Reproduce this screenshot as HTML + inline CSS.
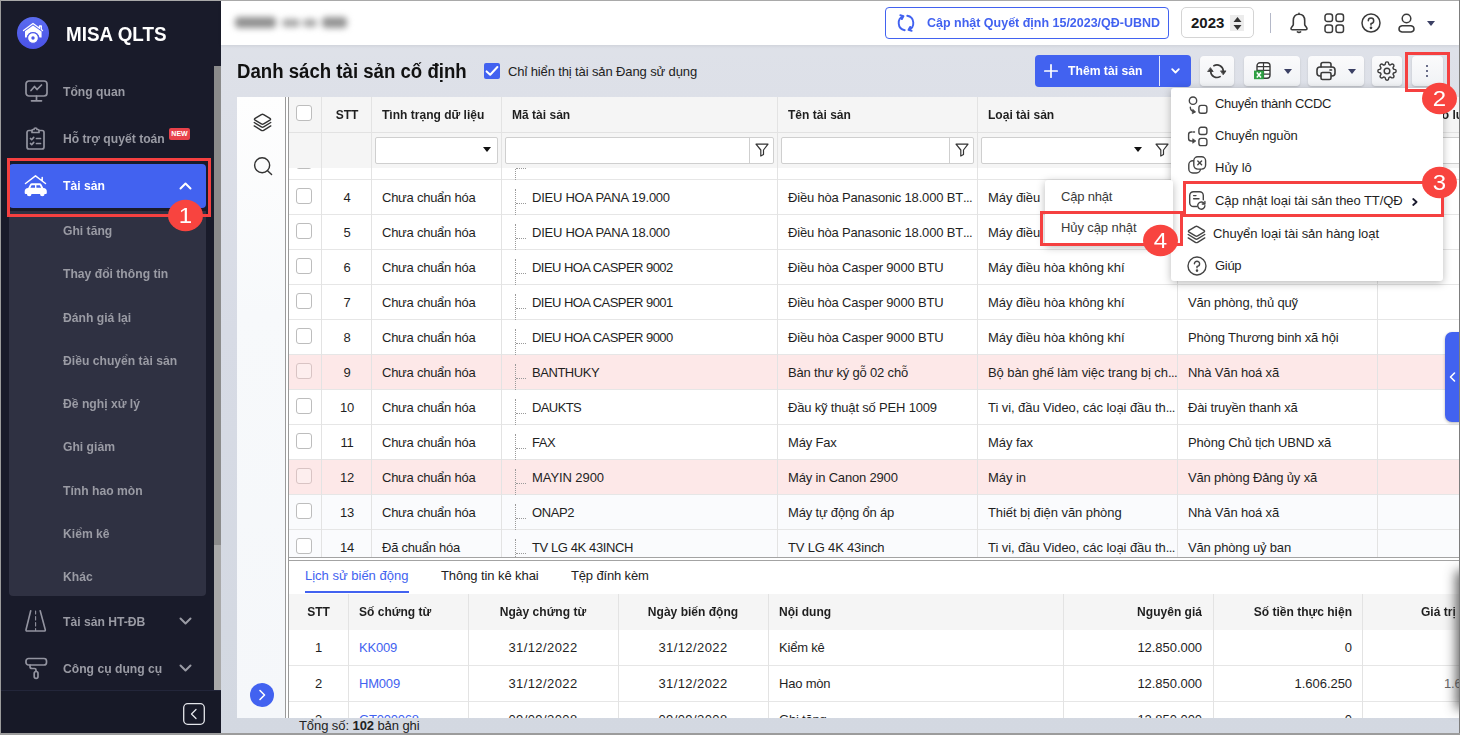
<!DOCTYPE html>
<html lang="vi">
<head>
<meta charset="utf-8">
<title>MISA QLTS - Danh sách tài sản cố định</title>
<style>
*{box-sizing:border-box;margin:0;padding:0}
html,body{width:1460px;height:735px;overflow:hidden;background:#e0e3ea;font-family:"Liberation Sans",sans-serif;font-size:13px;color:#1f1f1f}
#app{position:relative;width:1460px;height:735px;overflow:hidden;background:linear-gradient(#dfe2e9,#dde0e8 14%,#d7dbe5 45%,#d3d8e1)}
.abs{position:absolute}
i{font-style:normal;display:block;position:absolute}
svg{display:block;position:absolute;overflow:visible}
/* frame */
#frame-t{left:0;top:0;width:1460px;height:1px;background:#a9a9a9;z-index:50}
#frame-l{left:0;top:0;width:1px;height:735px;background:#9b9b9b;z-index:50}
#frame-r{left:1459px;top:0;width:1px;height:735px;background:#7d7d7d;z-index:50}
#frame-b{left:0;top:733px;width:1460px;height:2px;background:#9c9c9c;z-index:50}
/* sidebar */
#side{left:0;top:0;width:221px;height:735px;background:#191b2a}
#side .lbl{position:absolute;left:63px;font-weight:bold;font-size:13.5px;transform:scaleX(.9);transform-origin:0 50%;margin-top:1px;color:#9a9ba4;white-space:nowrap;line-height:20px}
#sb-thumb{left:214px;top:66px;width:7px;height:479px;background:#8b8b8b}
#sb-track{left:214px;top:545px;width:7px;height:145px;background:#a9a9a9}
#side-bot{left:0;top:690px;width:221px;height:44px;background:#171927;border-top:1px solid #23263a}
#sub{left:9px;top:211px;width:197px;height:385px;background:#2f3142;border-radius:0 0 4px 4px}
#act{left:9px;top:164px;width:197px;height:44px;background:#4262f0;border-radius:4px}
.si{position:absolute;left:63px;font-weight:bold;font-size:13.5px;transform:scaleX(.9);transform-origin:0 50%;margin-top:1px;color:#9a9ba4;white-space:nowrap;line-height:20px}
.new{position:absolute;left:169px;top:128px;width:21px;height:12px;background:#e8424a;border-radius:2px;color:#fff;font-size:7px;font-weight:bold;line-height:12px;text-align:center;letter-spacing:0}
/* red annotations */
.rbox{position:absolute;border:3px solid #f54040;z-index:30}
.badge{position:absolute;width:35px;height:35px;border-radius:50%;background:#f8443f;color:#fff;font-size:24px;line-height:36px;text-align:center;z-index:31;transform:scaleY(.894)}
/* topbar */
#top{left:221px;top:1px;width:1238px;height:44px;background:#fff;box-shadow:0 1px 3px rgba(0,0,0,.08)}
#upd{left:885px;top:7px;width:284px;height:32px;border:1px solid #4262f0;border-radius:4px;background:#fff;color:#4262f0;font-weight:bold;font-size:13px;line-height:30px;white-space:nowrap}
#upd span{position:absolute;left:41px;top:0;transform:scaleX(.96);transform-origin:0 50%}
#year{left:1181px;top:7px;width:73px;height:31px;border:1px solid #d4d4d4;border-radius:5px;background:#fff}
#year b{position:absolute;left:9px;top:0;line-height:30px;font-size:15px;color:#1a1a1a}
#spin{left:48px;top:7px;width:14px;height:16px;background:#ececec}
#sep{left:1270px;top:13px;width:1px;height:20px;background:#b4b8c8}
/* toolbar */
#title{left:237px;top:57px;font-size:20px;transform:scaleX(.931);transform-origin:0 50%;font-weight:bold;color:#111;white-space:nowrap;line-height:28px}
#chk{left:484px;top:63px;width:16px;height:16px;background:#4262f0;border-radius:2px}
#chklbl{left:508px;top:62px;letter-spacing:-.12px;line-height:20px;white-space:nowrap;color:#222}
#add{left:1035px;top:55px;width:156px;height:32px;background:#4262f0;border-radius:4px;color:#fff;font-weight:bold}
#add span{position:absolute;left:33px;top:0;transform:scaleX(.937);transform-origin:0 50%;line-height:31px;white-space:nowrap}
#add i.dv{left:124px;top:1px;width:1px;height:30px;background:#dfe5ff}
.tb{position:absolute;top:56px;height:30px;background:linear-gradient(#fbfbfc,#f0f2f5);border-radius:4px;box-shadow:0 1px 2px rgba(0,0,0,.16)}
.tb .caret,#top-caret{border-left-width:4px;border-right-width:4px;border-top-width:5px;border-top-color:#3b4064}
/* panel */
#panel{left:237px;top:97px;width:1222px;height:621px;background:#fff;overflow:hidden}
#lp{left:0;top:0;width:48px;height:621px;background:linear-gradient(#fefefe,#f7f9fb 35%,#f5f7fa)}
#spl1{left:48px;top:0;width:1px;height:621px;background:#9a9a9a}
#spl2{left:51px;top:0;width:1px;height:621px;background:#9a9a9a}
#grid{left:52px;top:0;width:1170px;height:460px;overflow:hidden;background:#fff}
#gh{left:0;top:0;width:1170px;height:71px;background:#f5f5f5;z-index:3}
#gh .hl{position:absolute;left:0;top:35px;width:1170px;height:1px;background:#e2e2e2}
.h{position:absolute;top:8px;font-weight:bold;transform:scaleX(.926);transform-origin:0 50%;line-height:20px;white-space:nowrap;color:#1f1f1f}
.vl{position:absolute;top:0;width:1px;height:460px;background:#e3e3e3;z-index:4}
.fi{position:absolute;top:39.600px;height:27px;background:#fff;border:1px solid #cfcfcf;border-radius:2px}
.fi i.d{top:0;right:23px;width:1px;height:25px;background:#cfcfcf}
.caret{width:0;height:0;border-left:4px solid transparent;border-right:4px solid transparent;border-top:5px solid #111}
#body{left:0;top:71px;width:1170px;height:388px}
.r{position:absolute;left:0;width:1170px;height:35px;border-bottom:1px solid #e6e6e6;background:#fff}
.r.pink{background:#fde8e8}
.r.alt{background:#fafbfd}
.cb{left:7px;top:8px;width:16px;height:16px;border:1px solid #bdbdbd;border-radius:3px;background:#fff}
.r.pink .cb{background:#fdeeee;border-color:#d9c4c4}
.c{position:absolute;top:8px;line-height:20px;white-space:nowrap;letter-spacing:-.25px}
.c1{left:33px;width:50px;text-align:center}
.c2{left:93px}
.c3{left:243px}
.c4{left:499px;letter-spacing:-.18px}
.c5{left:699px;letter-spacing:-.07px}
.c6{left:899px;letter-spacing:-.16px}
.el{letter-spacing:-.600px}
.tv{left:226px;top:9px;width:0;height:26px;border-left:1px dotted #9a9a9a}
.th{left:227px;top:23px;width:10px;height:0;border-top:1px dotted #9a9a9a}
/* split horizontal */
#hs1{left:52px;top:460px;width:1170px;height:1px;background:#a3a3a3}
#hs2{left:52px;top:463px;width:1170px;height:1px;background:#a3a3a3}
/* bottom */
#bot{left:52px;top:464px;width:1170px;height:157px;background:#fff;overflow:hidden}
.tab{position:absolute;top:5px;line-height:20px;white-space:nowrap;color:#222}
#bh{left:0;top:33px;width:1170px;height:36px;background:#f5f5f5}
.bvl{position:absolute;top:33px;width:1px;height:130px;background:#e3e3e3}
.br{position:absolute;left:0;width:1170px;height:36px;border-bottom:1px solid #e6e6e6}
.bc{position:absolute;top:8px;line-height:20px;white-space:nowrap;letter-spacing:-.2px}
.bh{position:absolute;top:8px;margin-top:0;line-height:20px;white-space:nowrap;font-weight:bold;transform:scaleX(.926);transform-origin:0 50%}
a.lk{color:#4262f0;text-decoration:none}
#foot{left:299px;top:716px;letter-spacing:-.08px;line-height:20px;white-space:nowrap;color:#222}
#rshadow{left:1461px;top:576px;width:10px;height:128px;box-shadow:0 0 12px 5px rgba(70,70,70,.85);z-index:8}
#rtab{left:1445px;top:332px;width:15px;height:90px;background:#4262f0;border-radius:7px 0 0 7px;z-index:9;box-shadow:0 1px 3px rgba(0,0,0,.3)}
/* menus */
#menu{left:1171px;top:88px;width:272px;height:193px;background:#fff;border-radius:3px;box-shadow:0 2px 8px rgba(0,0,0,.28);z-index:20}
.mi{position:absolute;left:44px;margin-top:1px;line-height:20px;white-space:nowrap;color:#1f1f1f}
#smenu{left:1045px;top:180px;width:128px;height:65px;background:#fff;border-radius:3px;box-shadow:0 2px 8px rgba(0,0,0,.28);z-index:21}
#smenu .mi{left:16px;color:#3a3a3a}
</style>
</head>
<body>
<div id="app">
<i id="frame-t"></i><i id="frame-l"></i><i id="frame-r"></i><i id="frame-b"></i>

<!-- SIDEBAR -->
<div id="side" class="abs">
  <svg style="left:17px;top:17px" width="32" height="32" viewBox="0 0 32 32">
    <defs><linearGradient id="lg" x1="0" y1="0" x2="0" y2="1"><stop offset="0" stop-color="#5a6cf0"/><stop offset="1" stop-color="#4a52e6"/></linearGradient></defs>
    <circle cx="16" cy="16" r="16" fill="url(#lg)"/>
    <path d="M6.5 13.5 L16 6.5 L22.5 11.3 V9 h1.8 v3.6 l1.2 .9" fill="none" stroke="#fff" stroke-width="1.3" stroke-linejoin="round" stroke-linecap="round"/>
    <path d="M8 14.2 L16 8.4 L24.6 14.6 V20.5 H22.5 A6.6 6.6 0 0 0 9.6 20.5 H8 Z" fill="#fff"/>
    <circle cx="16" cy="21" r="5.4" fill="#fff" stroke="#4d58e8" stroke-width="1.1"/>
    <circle cx="16" cy="21" r="1.7" fill="#4d58e8"/>
  </svg>
  <div class="abs" style="left:66px;top:21.500px;font-size:19.500px;font-weight:bold;color:#fff;line-height:24px;white-space:nowrap;transform:scaleX(.966);transform-origin:0 50%">MISA QLTS</div>

  <!-- item 1 -->
  <svg style="left:25px;top:80px" width="23" height="22" viewBox="0 0 23 22" fill="none" stroke="#9394a0" stroke-width="1.700" stroke-linecap="round" stroke-linejoin="round">
    <rect x="1" y="1" width="21" height="15" rx="3"/>
    <path d="M6 10.5 L9.5 6.5 L12 9.5 L16.5 5"/>
    <path d="M11.5 16 V20.5 M6.5 20.8 H16.5"/>
  </svg>
  <div class="lbl" style="top:81px">Tổng quan</div>
  <!-- item 2 -->
  <svg style="left:26px;top:127px" width="19" height="23" viewBox="0 0 19 23" fill="none" stroke="#9394a0" stroke-width="1.700" stroke-linecap="round" stroke-linejoin="round">
    <path d="M5.5 3.5 H3 a2 2 0 0 0 -2 2 V20 a2 2 0 0 0 2 2 H16 a2 2 0 0 0 2 -2 V5.500 a2 2 0 0 0 -2 -2 H13.5"/>
    <path d="M6 5.500 V3.500 a1 1 0 0 1 1 -1 H8 a1.500 1.500 0 0 1 3 0 H12 a1 1 0 0 1 1 1 V5.500 Z"/>
    <path d="M4.500 11.500 l1.200 1.200 l2 -2.300 M10.500 11.500 H14.500 M4.500 16.500 l1.200 1.200 l2 -2.300 M10.500 16.500 H14.500"/>
  </svg>
  <div class="lbl" style="top:128px">Hỗ trợ quyết toán</div>
  <div class="new">NEW</div>

  <!-- submenu bg + active -->
  <div id="sub" class="abs"></div>
  <div id="act" class="abs"></div>
  <svg style="left:24px;top:174px" width="24" height="22" viewBox="0 0 24 22">
    <path d="M1.500 9.500 L11.500 1.800 L18.200 7 V3.500 M18.200 7 L21.500 9.500" fill="none" stroke="#fff" stroke-width="1.500" stroke-linecap="round" stroke-linejoin="round"/>
    <path d="M4.200 14 L6 10.500 Q6.600 9.300 8 9.300 H15.500 Q16.900 9.300 17.500 10.500 L19.300 14 Q22.800 14.300 22.800 17.200 V19 Q22.800 20 21.800 20 H20.600 A2.300 2.300 0 0 1 16 20 H7.500 A2.300 2.300 0 0 1 2.900 20 H1.700 Q0.700 20 0.700 19 V17.200 Q0.700 14.300 4.200 14 Z" fill="#fff"/>
    <path d="M6.400 13.800 L7.600 11.300 H11 V13.800 Z M12.400 11.300 H15.800 L17.100 13.800 H12.400 Z" fill="#4262f0"/>
  </svg>
  <div class="lbl" style="top:175px;color:#fff">Tài sản</div>
  <svg style="left:179px;top:182px" width="13" height="8" viewBox="0 0 13 8" fill="none" stroke="#fff" stroke-width="2" stroke-linecap="round" stroke-linejoin="round"><path d="M1.500 6.500 L6.500 1.500 L11.500 6.500"/></svg>

<div class="si" style="top:220.0px">Ghi tăng</div>
<div class="si" style="top:263.2px">Thay đổi thông tin</div>
<div class="si" style="top:306.5px">Đánh giá lại</div>
<div class="si" style="top:349.8px">Điều chuyển tài sản</div>
<div class="si" style="top:393.0px">Đề nghị xử lý</div>
<div class="si" style="top:436.2px">Ghi giảm</div>
<div class="si" style="top:479.5px">Tính hao mòn</div>
<div class="si" style="top:522.8px">Kiểm kê</div>
<div class="si" style="top:566.0px">Khác</div>


  <!-- Tai san HT-DB -->
  <svg style="left:25px;top:610px" width="22" height="22" viewBox="0 0 22 22" fill="none" stroke="#9394a0" stroke-width="1.600" stroke-linecap="round" stroke-linejoin="round">
    <path d="M5.700 .800 L1 19.800 Q.800 21 2 21 H19.300 Q20.500 21 20.300 19.800 L15.200 .800"/>
    <path d="M10.600 1 V4 M10.600 6.500 V10 M10.600 12.500 V16 M10.600 18.500 V20.500" stroke-width="1.100"/>
  </svg>
  <div class="lbl" style="top:611px">Tài sản HT-ĐB</div>
  <svg style="left:179px;top:617px" width="13" height="8" viewBox="0 0 13 8" fill="none" stroke="#9a9ba4" stroke-width="2" stroke-linecap="round" stroke-linejoin="round"><path d="M1.500 1.500 L6.500 6.500 L11.500 1.500"/></svg>
  <!-- Cong cu dung cu -->
  <svg style="left:25px;top:657px" width="23" height="23" viewBox="0 0 23 23" fill="none" stroke="#9394a0" stroke-width="1.700" stroke-linecap="round" stroke-linejoin="round">
    <rect x="1" y="1.500" width="20.500" height="6.500" rx="2.500"/>
    <path d="M5 8 V9.500 a2 2 0 0 0 2 2 H9.500 a1.500 1.500 0 0 1 1.500 1.500 V14"/>
    <rect x="9.200" y="14.500" width="3.800" height="7" rx="1.900"/>
  </svg>
  <div class="lbl" style="top:658px">Công cụ dụng cụ</div>
  <svg style="left:179px;top:664px" width="13" height="8" viewBox="0 0 13 8" fill="none" stroke="#9a9ba4" stroke-width="2" stroke-linecap="round" stroke-linejoin="round"><path d="M1.500 1.500 L6.500 6.500 L11.500 1.500"/></svg>

  <i id="sb-thumb"></i><i id="sb-track"></i>
  <div id="side-bot" class="abs">
    <svg style="left:183px;top:12px" width="22" height="22" viewBox="0 0 22 22" fill="none" stroke="#e4e5ea" stroke-width="1.300" stroke-linecap="round" stroke-linejoin="round"><rect x="0.700" y="0.700" width="20.600" height="20.600" rx="4"/><path d="M13 6.500 L8.500 11 L13 15.500"/></svg>
  </div>
  <div class="rbox" style="left:7px;top:158px;width:204px;height:59px"></div>
  <div class="badge" style="left:168px;top:198px">1</div>
</div>

<!-- TOPBAR -->
<div id="top" class="abs"></div>
<div class="abs" style="left:232px;top:14px;width:118px;height:16px;filter:blur(3.200px);z-index:2">
  <i style="left:3px;top:3px;width:41px;height:11px;background:#909090;border-radius:4px"></i>
  <i style="left:50px;top:5px;width:18px;height:8px;background:#a6a6a6;border-radius:4px"></i>
  <i style="left:71px;top:5px;width:14px;height:8px;background:#a6a6a6;border-radius:4px"></i>
  <i style="left:90px;top:3px;width:25px;height:11px;background:#949494;border-radius:4px"></i>
</div>
<div id="upd" class="abs">
  <svg style="left:11px;top:6px" width="18" height="18" viewBox="0 0 18 18" fill="none" stroke="#4262f0" stroke-width="1.900" stroke-linecap="round" stroke-linejoin="round">
    <path d="M7.730 16.190 A7.300 7.300 0 0 1 6.500 2.140 M3.300 1.200 L6.500 2.140 L4.900 5.100"/>
    <path d="M10.270 1.810 A7.300 7.300 0 0 1 11.500 15.860 M14.700 16.800 L11.500 15.860 L13.100 12.900"/>
  </svg>
  <span>Cập nhật Quyết định 15/2023/QĐ-UBND</span>
</div>
<div id="year" class="abs"><b>2023</b><i id="spin"></i>
  <svg style="left:51px;top:9px" width="9" height="13" viewBox="0 0 9 13"><path d="M4.500 0 L8.500 5 H0.500 Z M4.500 13 L8.500 8 H0.500 Z" fill="#333"/></svg>
</div>
<i id="sep"></i>
<!-- bell -->
<svg style="left:1289px;top:12px" width="20" height="22" viewBox="0 0 20 22" fill="none" stroke="#3a3a3a" stroke-width="1.600" stroke-linecap="round" stroke-linejoin="round">
  <path d="M10 2.200 C6.200 2.200 4.300 5 4.300 8.600 V12.500 C4.300 14 2 15.200 2 16.700 Q2 17.700 3.200 17.700 H16.800 Q18 17.700 18 16.700 C18 15.200 15.700 14 15.700 12.500 V8.600 C15.700 5 13.800 2.200 10 2.200 Z M10 2.200 V1.300"/>
  <path d="M8.400 19.900 Q10 20.900 11.600 19.900"/>
</svg>
<!-- apps -->
<svg style="left:1324px;top:13px" width="21" height="21" viewBox="0 0 21 21" fill="none" stroke="#3a3a3a" stroke-width="1.500">
  <rect x="1" y="1" width="7.500" height="7.500" rx="2.300"/><rect x="12" y="1" width="7.500" height="7.500" rx="2.300"/><rect x="1" y="12" width="7.500" height="7.500" rx="2.300"/><rect x="12" y="12" width="7.500" height="7.500" rx="2.300"/>
</svg>
<!-- help -->
<svg style="left:1361px;top:13px" width="20" height="20" viewBox="0 0 20 20" fill="none" stroke="#3a3a3a" stroke-width="1.500" stroke-linecap="round" stroke-linejoin="round">
  <circle cx="10" cy="10" r="9"/><path d="M7.300 7.800 A2.700 2.700 0 1 1 10 10.500 V12"/><circle cx="10" cy="14.800" r=".6" fill="#3a3a3a"/>
</svg>
<!-- user -->
<svg style="left:1397px;top:13px" width="19" height="20" viewBox="0 0 19 20" fill="none" stroke="#3a3a3a" stroke-width="1.500" stroke-linecap="round" stroke-linejoin="round">
  <circle cx="9.500" cy="5.500" r="4.300"/><path d="M5 12.800 H14 A4 3.200 0 0 1 14 19 H5 A4 3.200 0 0 1 5 12.800 Z"/>
</svg>
<i class="caret" id="top-caret" style="left:1427px;top:21px"></i>

<!-- TOOLBAR -->
<div id="title" class="abs">Danh sách tài sản cố định</div>
<i id="chk"></i>
<svg style="left:485px;top:65px;z-index:2" width="14" height="12" viewBox="0 0 14 12" fill="none" stroke="#fff" stroke-width="2" stroke-linecap="round" stroke-linejoin="round"><path d="M1.600 6.400 L5.200 9.800 L12.400 2"/></svg>
<div id="chklbl" class="abs">Chỉ hiển thị tài sản Đang sử dụng</div>

<div id="add" class="abs">
  <svg style="left:9px;top:9px" width="14" height="14" viewBox="0 0 14 14" stroke="#fff" stroke-width="1.700" stroke-linecap="round"><path d="M7 .8 V13.200 M.8 7 H13.200"/></svg>
  <span>Thêm tài sản</span><i class="dv"></i>
  <svg style="left:136px;top:13px" width="9" height="6.300" viewBox="0 0 10 7" fill="none" stroke="#fff" stroke-width="2" stroke-linecap="round" stroke-linejoin="round"><path d="M1.300 1.300 L5 5 L8.700 1.300"/></svg>
</div>
<div class="tb" style="left:1200px;width:34px">
  <svg style="left:0;top:0" width="34" height="30" viewBox="1200 56 34 30" fill="none" stroke="#3a3a3a" stroke-width="1.600" stroke-linecap="round" stroke-linejoin="round">
    <path d="M1213.850 65.740 A6.300 6.300 0 0 1 1223.300 71"/>
    <path d="M1220.150 76.660 A6.300 6.300 0 0 1 1210.700 71.400"/>
    <path d="M1220.900 70.900 H1226 L1223.400 74.500 Z M1208 71.500 H1213.200 L1210.600 67.900 Z" fill="#3a3a3a" stroke-width=".8"/>
  </svg>
</div>
<div class="tb" style="left:1244px;width:56px">
  <svg style="left:10px;top:6px" width="17" height="18" viewBox="0 0 17 18">
    <rect x="3" y=".800" width="13" height="15.400" rx="3" fill="#fff" stroke="#3a3a3a" stroke-width="1.400"/>
    <path d="M3 4.600 H16 M3 8.400 H16 M3 12.200 H16 M9.500 .800 V16.200" stroke="#3a3a3a" stroke-width="1.200"/>
    <rect x="0" y="8.600" width="9.800" height="8.600" fill="#2ea043"/>
    <path d="M2.800 10.600 L7 15.400 M7 10.600 L2.800 15.400" stroke="#fff" stroke-width="1.500"/>
  </svg>
  <i class="caret" style="left:40px;top:13px"></i>
</div>
<div class="tb" style="left:1308px;width:56px">
  <svg style="left:8px;top:5px" width="20" height="20" viewBox="0 0 20 20" fill="none" stroke="#3a3a3a" stroke-width="1.600" stroke-linecap="round" stroke-linejoin="round">
    <path d="M5 6 V3.500 a2 2 0 0 1 2 -2 H13 a2 2 0 0 1 2 2 V6"/>
    <rect x="1" y="6" width="18" height="9" rx="3"/>
    <rect x="5" y="11.500" width="10" height="7" rx="1.500" fill="#f5f6f8"/>
    <path d="M14 9 H15.500"/>
  </svg>
  <i class="caret" style="left:40px;top:13px"></i>
</div>
<div class="tb" style="left:1372px;width:30px">
  <svg style="left:5px;top:5px" width="20" height="20" viewBox="0 0 24 24" fill="none" stroke="#3a3a3a" stroke-width="1.700" stroke-linecap="round" stroke-linejoin="round">
    <circle cx="12" cy="12" r="3.400"/>
    <path d="M19.400 15a1.650 1.650 0 0 0 .33 1.820l.06.06a2 2 0 1 1-2.830 2.830l-.06-.06a1.650 1.650 0 0 0-1.820-.33 1.650 1.650 0 0 0-1 1.510V21a2 2 0 1 1-4 0v-.09a1.650 1.650 0 0 0-1.080-1.510 1.650 1.650 0 0 0-1.820.33l-.06.06a2 2 0 1 1-2.830-2.830l.06-.06a1.650 1.650 0 0 0 .33-1.820 1.650 1.650 0 0 0-1.510-1H3a2 2 0 1 1 0-4h.09a1.650 1.650 0 0 0 1.510-1.080 1.650 1.650 0 0 0-.33-1.820l-.06-.06a2 2 0 1 1 2.830-2.830l.06.06a1.650 1.650 0 0 0 1.820.33h.08a1.650 1.650 0 0 0 1-1.510V3a2 2 0 1 1 4 0v.09a1.650 1.650 0 0 0 1 1.510 1.650 1.650 0 0 0 1.820-.33l.06-.06a2 2 0 1 1 2.830 2.830l-.06.06a1.650 1.650 0 0 0-.33 1.820v.08a1.650 1.650 0 0 0 1.510 1H21a2 2 0 1 1 0 4h-.09a1.650 1.650 0 0 0-1.510 1z"/>
  </svg>
</div>
<div class="tb" style="left:1412px;width:31px">
  <i style="left:14px;top:9px;width:2px;height:2px;background:#3b4064;border-radius:50%"></i>
  <i style="left:14px;top:14px;width:2px;height:2px;background:#3b4064;border-radius:50%"></i>
  <i style="left:14px;top:19px;width:2px;height:2px;background:#3b4064;border-radius:50%"></i>
</div>

<!-- PANEL -->
<div id="panel" class="abs">
  <i id="lp"></i><i id="spl1"></i><i id="spl2"></i>
  <!-- left icons -->
  <svg style="left:15.500px;top:15.500px" width="19" height="19" viewBox="0 0 20 20" fill="none" stroke="#333" stroke-width="1.500" stroke-linecap="round" stroke-linejoin="round">
    <path d="M8.800 1.600 Q10 .900 11.200 1.600 L17.800 5.600 Q19.200 6.500 17.800 7.400 L11.200 11.400 Q10 12.100 8.800 11.400 L2.200 7.400 Q.800 6.500 2.200 5.600 Z"/>
    <path d="M1.300 10 L8.800 14.600 Q10 15.300 11.200 14.600 L18.700 10"/>
    <path d="M1.300 13.600 L8.800 18.200 Q10 18.900 11.200 18.200 L18.700 13.600"/>
  </svg>
  <svg style="left:15.500px;top:58.500px" width="20" height="20" viewBox="0 0 21 21" fill="none" stroke="#333" stroke-width="1.500" stroke-linecap="round"><circle cx="9.600" cy="9.700" r="7.900"/><path d="M15.300 15.400 L19.500 19.500"/></svg>
  <svg style="left:13px;top:586px" width="24" height="24" viewBox="0 0 24 24"><circle cx="12" cy="12" r="12" fill="#4262f0"/><path d="M10 7.500 L14.500 12 L10 16.500" fill="none" stroke="#fff" stroke-width="1.600" stroke-linecap="round" stroke-linejoin="round"/></svg>

  <div id="grid" class="abs">
    <div id="gh" class="abs">
      <i class="hl"></i>
      <i class="cb" style="top:8px"></i>
      <span class="h" style="left:33px;width:50px;text-align:center;transform-origin:50% 50%">STT</span>
      <span class="h" style="left:93px">Tình trạng dữ liệu</span>
      <span class="h" style="left:223px">Mã tài sản</span>
      <span class="h" style="left:499px">Tên tài sản</span>
      <span class="h" style="left:699px">Loại tài sản</span>
      <span class="h" style="left:899px">Bộ phận sử dụng</span>
      <span class="h" style="left:1128px">Lý do lưu</span>
      <div class="fi" style="left:86px;width:123px"><i class="caret" style="left:107px;top:9px"></i></div>
      <div class="fi" style="left:216px;width:269px"><i class="d"></i><svg class="fn" style="right:4px;top:5.500px" width="14" height="14" viewBox="0 0 14 14" fill="none" stroke="#333" stroke-width="1.200" stroke-linejoin="round"><path d="M1 1.200 H13 L8.500 7 V11.500 L5.800 13 V7 Z"/></svg></div>
      <div class="fi" style="left:492px;width:193px"><i class="d"></i><svg class="fn" style="right:4px;top:5.500px" width="14" height="14" viewBox="0 0 14 14" fill="none" stroke="#333" stroke-width="1.200" stroke-linejoin="round"><path d="M1 1.200 H13 L8.500 7 V11.500 L5.800 13 V7 Z"/></svg></div>
      <div class="fi" style="left:692px;width:193px"><i class="caret" style="left:152px;top:9px"></i><svg class="fn" style="right:4px;top:5.500px" width="14" height="14" viewBox="0 0 14 14" fill="none" stroke="#333" stroke-width="1.200" stroke-linejoin="round"><path d="M1 1.200 H13 L8.500 7 V11.500 L5.800 13 V7 Z"/></svg></div>
      <div class="fi" style="left:892px;width:193px"></div>
      <div class="fi" style="left:1092px;width:100px"></div>
    </div>
    <div id="body" class="abs">
      <div class="r" style="top:-23px"><i class="cb"></i><i class="tv"></i><i class="th"></i></div>
<div class="r " style="top:12px"><i class="cb"></i><span class="c c1">4</span><span class="c c2">Chưa chuẩn hóa</span><i class="tv"></i><i class="th"></i><span class="c c3" style="letter-spacing:-0.25px">DIEU HOA PANA 19.000</span><span class="c c4">Điều hòa Panasonic 18.000 BT<span class="el">...</span></span><span class="c c5" style="width:55px;overflow:hidden">Máy điều hòa không khí</span><span class="c c6"></span></div>
<div class="r " style="top:47px"><i class="cb"></i><span class="c c1">5</span><span class="c c2">Chưa chuẩn hóa</span><i class="tv"></i><i class="th"></i><span class="c c3" style="letter-spacing:-0.25px">DIEU HOA PANA 18.000</span><span class="c c4">Điều hòa Panasonic 18.000 BT<span class="el">...</span></span><span class="c c5" style="width:55px;overflow:hidden">Máy điều hòa không khí</span><span class="c c6"></span></div>
<div class="r " style="top:82px"><i class="cb"></i><span class="c c1">6</span><span class="c c2">Chưa chuẩn hóa</span><i class="tv"></i><i class="th"></i><span class="c c3" style="letter-spacing:-0.55px">DIEU HOA CASPER 9002</span><span class="c c4">Điều hòa Casper 9000 BTU</span><span class="c c5">Máy điều hòa không khí</span><span class="c c6"></span></div>
<div class="r " style="top:117px"><i class="cb"></i><span class="c c1">7</span><span class="c c2">Chưa chuẩn hóa</span><i class="tv"></i><i class="th"></i><span class="c c3" style="letter-spacing:-0.55px">DIEU HOA CASPER 9001</span><span class="c c4">Điều hòa Casper 9000 BTU</span><span class="c c5">Máy điều hòa không khí</span><span class="c c6">Văn phòng, thủ quỹ</span></div>
<div class="r " style="top:152px"><i class="cb"></i><span class="c c1">8</span><span class="c c2">Chưa chuẩn hóa</span><i class="tv"></i><i class="th"></i><span class="c c3" style="letter-spacing:-0.55px">DIEU HOA CASPER 9000</span><span class="c c4">Điều hòa Casper 9000 BTU</span><span class="c c5">Máy điều hòa không khí</span><span class="c c6">Phòng Thương binh xã hội</span></div>
<div class="r pink" style="top:187px"><i class="cb"></i><span class="c c1">9</span><span class="c c2">Chưa chuẩn hóa</span><i class="tv"></i><i class="th"></i><span class="c c3" style="letter-spacing:-0.45px">BANTHUKY</span><span class="c c4">Bàn thư ký gỗ 02 chỗ</span><span class="c c5">Bộ bàn ghế làm việc trang bị ch<span class="el">...</span></span><span class="c c6">Nhà Văn hoá xã</span></div>
<div class="r " style="top:222px"><i class="cb"></i><span class="c c1">10</span><span class="c c2">Chưa chuẩn hóa</span><i class="tv"></i><i class="th"></i><span class="c c3" style="letter-spacing:-0.6px">DAUKTS</span><span class="c c4">Đầu kỹ thuật số PEH 1009</span><span class="c c5">Ti vi, đầu Video, các loại đầu th<span class="el">...</span></span><span class="c c6">Đài truyền thanh xã</span></div>
<div class="r " style="top:257px"><i class="cb"></i><span class="c c1">11</span><span class="c c2">Chưa chuẩn hóa</span><i class="tv"></i><i class="th"></i><span class="c c3" style="letter-spacing:-0.5px">FAX</span><span class="c c4">Máy Fax</span><span class="c c5">Máy fax</span><span class="c c6">Phòng Chủ tịch UBND xã</span></div>
<div class="r pink" style="top:292px"><i class="cb"></i><span class="c c1">12</span><span class="c c2">Chưa chuẩn hóa</span><i class="tv"></i><i class="th"></i><span class="c c3" style="letter-spacing:-0.08px">MAYIN 2900</span><span class="c c4">Máy in Canon 2900</span><span class="c c5">Máy in</span><span class="c c6">Văn phòng Đảng ủy xã</span></div>
<div class="r alt" style="top:327px"><i class="cb"></i><span class="c c1">13</span><span class="c c2">Chưa chuẩn hóa</span><i class="tv"></i><i class="th"></i><span class="c c3" style="letter-spacing:-0.4px">ONAP2</span><span class="c c4">Máy tự động ổn áp</span><span class="c c5">Thiết bị điện văn phòng</span><span class="c c6">Nhà Văn hoá xã</span></div>
<div class="r alt" style="top:362px"><i class="cb"></i><span class="c c1">14</span><span class="c c2">Đã chuẩn hóa</span><i class="tv"></i><i class="th"></i><span class="c c3" style="letter-spacing:-0.4px">TV LG 4K 43INCH</span><span class="c c4">TV LG 4K 43inch</span><span class="c c5">Ti vi, đầu Video, các loại đầu th<span class="el">...</span></span><span class="c c6">Văn phòng uỷ ban</span></div>

    </div>
    <i class="vl" style="left:32px"></i><i class="vl" style="left:82px"></i><i class="vl" style="left:212px"></i><i class="vl" style="left:488px"></i><i class="vl" style="left:688px"></i><i class="vl" style="left:888px"></i><i class="vl" style="left:1088px"></i>
  </div>
  <i id="hs1"></i><i id="hs2"></i>

  <div id="bot" class="abs">
    <span class="tab" style="left:16px;color:#4262f0">Lịch sử biến động</span>
    <span class="tab" style="left:152px;letter-spacing:-.08px">Thông tin kê khai</span>
    <span class="tab" style="left:282px;letter-spacing:-.15px">Tệp đính kèm</span>
    <i style="left:16px;top:30px;width:104px;height:2px;background:#4262f0"></i>
    <i id="bh"></i>
    <span class="bh" style="left:0;width:59px;text-align:center;top:41px;transform-origin:50% 50%">STT</span>
    <span class="bh" style="left:70px;top:41px">Số chứng từ</span>
    <span class="bh" style="left:179px;width:150px;text-align:center;top:41px;transform-origin:50% 50%">Ngày chứng từ</span>
    <span class="bh" style="left:329px;width:150px;text-align:center;top:41px;transform-origin:50% 50%">Ngày biến động</span>
    <span class="bh" style="left:490px;top:41px">Nội dung</span>
    <span class="bh" style="left:774px;width:139px;text-align:right;top:41px;transform-origin:100% 50%">Nguyên giá</span>
    <span class="bh" style="left:924px;width:139px;text-align:right;top:41px;transform-origin:100% 50%">Số tiền thực hiện</span>
    <span class="bh" style="left:1132px;top:41px">Giá trị còn lại</span>

    <div class="br" style="top:69px">
      <span class="bc" style="left:0;width:59px;text-align:center">1</span><span class="bc" style="left:70px"><a class="lk">KK009</a></span>
      <span class="bc" style="left:179px;width:150px;text-align:center;letter-spacing:.4px">31/12/2022</span><span class="bc" style="left:329px;width:150px;text-align:center;letter-spacing:.4px">31/12/2022</span>
      <span class="bc" style="left:490px">Kiểm kê</span><span class="bc" style="left:774px;width:139px;text-align:right;letter-spacing:-.05px">12.850.000</span><span class="bc" style="left:924px;width:139px;text-align:right;letter-spacing:-.05px">0</span>
    </div>
    <div class="br" style="top:105px">
      <span class="bc" style="left:0;width:59px;text-align:center">2</span><span class="bc" style="left:70px"><a class="lk">HM009</a></span>
      <span class="bc" style="left:179px;width:150px;text-align:center;letter-spacing:.4px">31/12/2022</span><span class="bc" style="left:329px;width:150px;text-align:center;letter-spacing:.4px">31/12/2022</span>
      <span class="bc" style="left:490px">Hao mòn</span><span class="bc" style="left:774px;width:139px;text-align:right;letter-spacing:-.05px">12.850.000</span><span class="bc" style="left:924px;width:139px;text-align:right;letter-spacing:-.05px">1.606.250</span>
      <span class="bc" style="left:1155px;color:#666">1.606.250</span>
    </div>
    <div class="br" style="top:141px">
      <span class="bc" style="left:0;width:59px;text-align:center">3</span><span class="bc" style="left:70px"><a class="lk">GT000068</a></span>
      <span class="bc" style="left:179px;width:150px;text-align:center;letter-spacing:.4px">09/09/2008</span><span class="bc" style="left:329px;width:150px;text-align:center;letter-spacing:.4px">09/09/2008</span>
      <span class="bc" style="left:490px">Ghi tăng</span><span class="bc" style="left:774px;width:139px;text-align:right;letter-spacing:-.05px">12.850.000</span><span class="bc" style="left:924px;width:139px;text-align:right;letter-spacing:-.05px">0</span>
    </div>
    <i class="bvl" style="left:59px"></i><i class="bvl" style="left:179px"></i><i class="bvl" style="left:329px"></i><i class="bvl" style="left:479px"></i><i class="bvl" style="left:774px"></i><i class="bvl" style="left:924px"></i><i class="bvl" style="left:1073px"></i>
  </div>
</div>
<div id="foot" class="abs">Tổng số: <b>102</b> bản ghi</div>
<i id="rshadow"></i>
<div id="rtab" class="abs"><svg style="left:4px;top:40px" width="7" height="10" viewBox="0 0 7 10" fill="none" stroke="#fff" stroke-width="1.600" stroke-linecap="round" stroke-linejoin="round"><path d="M5.500 1 L1.500 5 L5.500 9"/></svg></div>

<!-- MENUS -->
<div id="menu" class="abs">
  <svg style="left:16px;top:7px" width="21" height="20" viewBox="0 0 21 20" fill="none" stroke="#444" stroke-width="1.400" stroke-linecap="round" stroke-linejoin="round">
    <circle cx="6" cy="5.700" r="3.700"/><rect x="11.900" y="10.400" width="8" height="7.800" rx="2.200"/>
    <path d="M3.300 12.300 Q3.500 16.200 7 16.700"/><path d="M6 14.600 L8.600 16.900 L5.600 18.600 Z" fill="#444" stroke-width=".8"/>
  </svg>
  <svg style="left:16px;top:38px" width="21" height="21" viewBox="0 0 21 21" fill="none" stroke="#444" stroke-width="1.400" stroke-linecap="round" stroke-linejoin="round">
    <rect x="11.900" y="1.300" width="8" height="7.200" rx="2.200"/><rect x="11.900" y="12.400" width="8" height="7.200" rx="2.200"/>
    <path d="M7.500 6 H5" stroke-dasharray="1 1.400"/><path d="M4.300 6 Q1.600 6 1.600 8.500 V12.500 Q1.600 15 4.300 15 H6.500"/><path d="M6 13 L8.800 15 L6 17 Z" fill="#444" stroke-width=".8"/>
  </svg>
  <svg style="left:17px;top:68px" width="19" height="19" viewBox="0 0 19 19" fill="none" stroke="#444" stroke-width="1.400" stroke-linecap="round" stroke-linejoin="round">
    <rect x=".800" y="4.800" width="11.600" height="12.200" rx="4"/>
    <rect x="5.800" y=".800" width="11.800" height="12.300" rx="4" fill="#fff"/>
    <path d="M9.800 5 L13.600 8.800 M13.600 5 L9.800 8.800"/>
  </svg>
  <svg style="left:18px;top:103px" width="18" height="20" viewBox="0 0 18 20" fill="none" stroke="#444" stroke-width="1.400" stroke-linecap="round" stroke-linejoin="round">
    <path d="M7.800 15.500 H4.500 a3.800 3.800 0 0 1 -3.800 -3.800 V4.500 a3.800 3.800 0 0 1 3.800 -3.800 H10.500 a3.800 3.800 0 0 1 3.800 3.800 V8.800"/>
    <path d="M4.600 4.600 H7 M4.600 7.800 H10"/>
    <path d="M15.300 12.600 A3.600 3.600 0 1 0 15.900 14.800"/><path d="M15.900 10.400 V13 H13.300"/>
  </svg>
  <svg style="left:16px;top:137px" width="19" height="19" viewBox="0 0 20 20" fill="none" stroke="#444" stroke-width="1.500" stroke-linecap="round" stroke-linejoin="round">
    <path d="M8.800 1.600 Q10 .900 11.200 1.600 L17.800 5.600 Q19.200 6.500 17.800 7.400 L11.200 11.400 Q10 12.100 8.800 11.400 L2.200 7.400 Q.800 6.500 2.200 5.600 Z"/>
    <path d="M1.300 10 L8.800 14.600 Q10 15.300 11.200 14.600 L18.700 10"/>
    <path d="M1.300 13.600 L8.800 18.200 Q10 18.900 11.200 18.200 L18.700 13.600"/>
  </svg>
  <svg style="left:16px;top:168px" width="20" height="20" viewBox="0 0 20 20" fill="none" stroke="#444" stroke-width="1.400" stroke-linecap="round" stroke-linejoin="round">
    <circle cx="10" cy="10" r="9"/><path d="M7.400 7.800 A2.600 2.600 0 1 1 10 10.400 V11.800"/><circle cx="10" cy="14.600" r=".6" fill="#444"/>
  </svg>
  <svg style="left:241px;top:110px" width="6" height="8" viewBox="0 0 6 8" fill="none" stroke="#1a1a2e" stroke-width="1.800" stroke-linecap="round" stroke-linejoin="round"><path d="M1.200 1 L4.600 4 L1.200 7"/></svg>

  <span class="mi" style="top:5px;letter-spacing:-.36px">Chuyển thành CCDC</span>
  <span class="mi" style="top:37px;letter-spacing:-.17px">Chuyển nguồn</span>
  <span class="mi" style="top:69px">Hủy lô</span>
  <span class="mi" style="top:102px;letter-spacing:-.07px">Cập nhật loại tài sản theo TT/QĐ</span>
  <span class="mi" style="top:135px;left:42px;letter-spacing:-.06px">Chuyển loại tài sản hàng loạt</span>
  <span class="mi" style="top:167px;letter-spacing:-.3px">Giúp</span>
</div>
<div id="smenu" class="abs">
  <span class="mi" style="top:6px;letter-spacing:-.2px">Cập nhật</span>
  <span class="mi" style="top:37px;letter-spacing:-.1px">Hủy cập nhật</span>
</div>
<div class="rbox" style="left:1405px;top:52px;width:45px;height:40px"></div>
<div class="badge" style="left:1422px;top:81px">2</div>
<div class="rbox" style="left:1183px;top:181px;width:261px;height:36px"></div>
<div class="badge" style="left:1422px;top:165px">3</div>
<div class="rbox" style="left:1040px;top:211px;width:143px;height:35px"></div>
<div class="badge" style="left:1143px;top:223px">4</div>
</div>
</body>
</html>
